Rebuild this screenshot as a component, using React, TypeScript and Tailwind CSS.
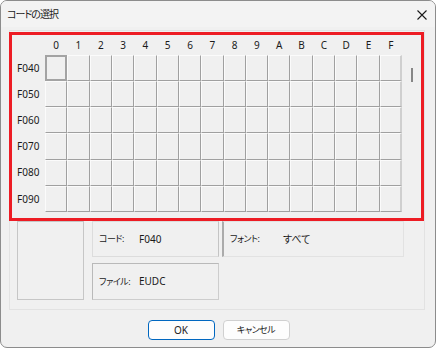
import React from 'react';

const cols = ['0', '1', '2', '3', '4', '5', '6', '7', '8', '9', 'A', 'B', 'C', 'D', 'E', 'F'];
const rows = ['F040', 'F050', 'F060', 'F070', 'F080', 'F090'];

const font = {
  fontFamily: '"Noto Sans", "Noto Sans CJK JP", sans-serif',
  fontFeatureSettings: '"palt"',
};

const CodeGrid = () => (
  <div className="flex">
    {/* row labels */}
    <div className="flex w-[28px] shrink-0 flex-col pt-[23px]">
      {rows.map((r) => (
        <div key={r} className="flex h-[26.2px] items-center text-[10px] text-[#1a1a1a]">
          {r}
        </div>
      ))}
    </div>
    <div className="flex flex-col">
      {/* column labels */}
      <div className="grid h-[23px] w-[357px] grid-cols-16 items-center pt-[3px]">
        {cols.map((c) => (
          <div key={c} className="text-center text-[10px] leading-none text-[#1a1a1a]">
            {c}
          </div>
        ))}
      </div>
      <div className="grid h-[157px] w-[357px] grid-cols-16 grid-rows-6">
        {rows.map((r, ri) =>
          cols.map((c, ci) =>
            ri === 0 && ci === 0 ? (
              <div key={r + c} className="border-2 border-[#a3a3a3] bg-[#f0f0f0]" />
            ) : (
              <div
                key={r + c}
                className={`border-t border-l border-t-[#fbfbfb] border-l-[#fbfbfb] border-r border-b border-r-[#a0a0a0] border-b-[#a0a0a0] bg-[#f0f0f0] ${
                  ci === 15 ? 'border-r-2 border-r-[#cfcfcf]' : ''
                }`}
              />
            )
          )
        )}
      </div>
    </div>
    {/* scroll bar */}
    <div className="ml-[3px] w-[15px] pt-[36px]">
      <div className="ml-[6px] h-[14px] w-[2px] bg-[#868686]" />
    </div>
  </div>
);

const InfoBox = ({ label, value, labelW, className }: { label: string; value: string; labelW: string; className: string }) => (
  <div className={`grid items-center pl-[6px] text-[#1a1a1a] ${labelW} ${className}`}>
    <span className="whitespace-nowrap text-[9px] tracking-[-0.5px]">{label}</span>
    <span className="whitespace-nowrap text-[10px]">{value}</span>
  </div>
);

const App = () => {
  return (
    <div className="h-[348px] w-[436px] bg-white" style={font}>
      <div className="relative flex h-[348px] w-[436px] flex-col overflow-hidden rounded-[7px] border border-[#8c8c8c] bg-[#f0f0f0]">
        {/* title bar */}
        <div className="flex h-[26px] shrink-0 items-center justify-between bg-[#f3f3f3] pl-[6px] pr-[6px]">
          <span className="text-[10px] tracking-[-1px] text-[#1a1a1a]">コードの選択</span>
          <svg width="12" height="12" viewBox="0 0 12 12" className="mr-[1px] mt-[1px]">
            <path d="M1.5 1.5 L10.5 10.5 M10.5 1.5 L1.5 10.5" stroke="#1a1a1a" strokeWidth="1.1" />
          </svg>
        </div>

        {/* main panel */}
        <div className="ml-[8px] mt-[3px] h-[280px] w-[416px] border border-[#e2e2e2] pl-[7px] pt-[1px]">
          <CodeGrid />
          <div className="mt-[9px] flex gap-[8px]">
            <div className="h-[79px] w-[67px] border border-[#c6c6c6]" />
            <div className="flex flex-col gap-[6px]">
              <div className="flex gap-[3px]">
                <InfoBox
                  label="コード:"
                  value="F040"
                  labelW="grid-cols-[40px_1fr]"
                  className="h-[36px] w-[127px] border border-[#dcdcdc] border-r-[#c4c4c4]"
                />
                <InfoBox
                  label="フォント:"
                  value="すべて"
                  labelW="grid-cols-[53px_1fr]"
                  className="h-[36px] w-[182px] border border-[#e2e2e2] border-l-2 border-l-[#ababab]"
                />
              </div>
              <InfoBox
                label="ファイル:"
                value="EUDC"
                labelW="grid-cols-[40px_1fr]"
                className="h-[37px] w-[127px] border border-[#b9b9b9] border-r-[#cdcdcd] border-b-[#cdcdcd]"
              />
            </div>
          </div>
        </div>

        {/* buttons */}
        <div className="mt-[10px] flex justify-center gap-[8px] pl-[1px]">
          <button className="h-[20px] w-[67px] rounded-[4px] border border-[#0067c0] bg-[#fdfdfd] text-[10px] text-[#1a1a1a]">
            OK
          </button>
          <button className="h-[20px] w-[67px] rounded-[4px] border border-[#d0d0d0] bg-[#fdfdfd] text-[9px] tracking-[-0.5px] text-[#1a1a1a]">
            キャンセル
          </button>
        </div>

        {/* red annotation frame */}
        <div className="pointer-events-none absolute left-[8px] top-[31px] h-[189px] w-[415px] border-[3px] border-[#ed1c24]" />
      </div>
    </div>
  );
};

export default App;
